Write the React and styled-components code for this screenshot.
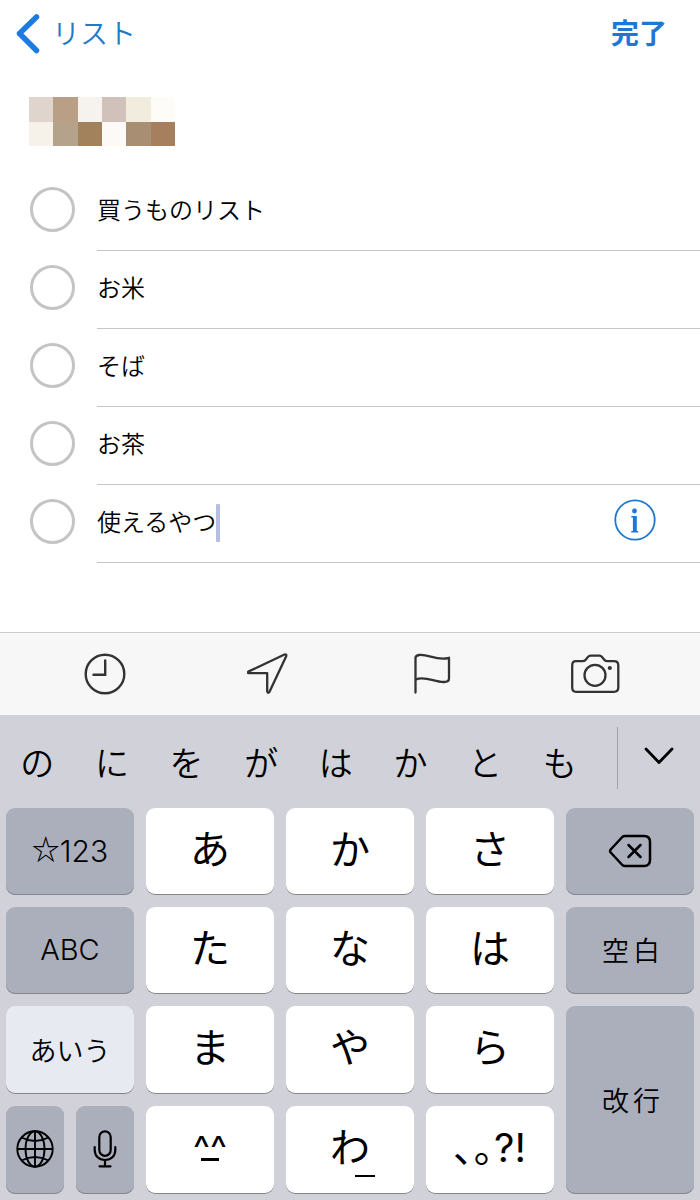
import React, { useState } from "react";
import styled, { createGlobalStyle } from "styled-components";

const TASKS = ["買うものリスト", "お米", "そば", "お茶"];

const CANDIDATES = ["の", "に", "を", "が", "は", "か", "と", "も"];

const MOSAIC = [
  ["#dfd5cd", "#b99f85", "#f6f2ee", "#d0c2ba", "#f2ecde", "#fdfcf7"],
  ["#f6f1e9", "#b4a28a", "#a1825c", "#fdf9f7", "#a88e72", "#a67f5f"],
];

const App = () => {
  const [draft, setDraft] = useState("使えるやつ");

  return (
    <Screen>
      <GlobalStyle />
      <NavBar>
        <BackLink href="#lists">
          <BackIcon />
          リスト
        </BackLink>
        <DoneButton type="button">完了</DoneButton>
      </NavBar>

      <Content>
        <Mosaic />
        <TaskList>
          {TASKS.map((task) => (
            <TaskRow key={task}>
              <TaskLabel>
                <Check type="checkbox" />
                <TaskText>{task}</TaskText>
              </TaskLabel>
            </TaskRow>
          ))}
          <TaskRow>
            <Check type="checkbox" aria-label={draft} />
            <TaskText>
              <TaskInput
                aria-label="リマインダー"
                value={draft}
                onChange={(e) => setDraft(e.target.value)}
              />
              <Caret />
              <InfoButton type="button" aria-label="詳細">
                <InfoIcon />
              </InfoButton>
            </TaskText>
          </TaskRow>
        </TaskList>
      </Content>

      <Toolbar>
        <ToolButton type="button" aria-label="日時"><ClockIcon /></ToolButton>
        <ToolButton type="button" aria-label="場所"><LocationIcon /></ToolButton>
        <ToolButton type="button" aria-label="フラグ"><FlagIcon /></ToolButton>
        <ToolButton type="button" aria-label="カメラ"><CameraIcon /></ToolButton>
      </Toolbar>

      <Keyboard>
        <CandidateBar>
          <Candidates>
            {CANDIDATES.map((word) => (
              <Candidate type="button" key={word}>{word}</Candidate>
            ))}
          </Candidates>
          <Divider />
          <ExpandButton type="button" aria-label="候補を開く">
            <ChevronIcon />
          </ExpandButton>
        </CandidateBar>

        <Keys>
          <Key type="button" $tone="dark" $size={30}><Star>☆</Star>123</Key>
          <Key type="button">あ</Key>
          <Key type="button">か</Key>
          <Key type="button">さ</Key>
          <Key type="button" $tone="dark" aria-label="削除"><DeleteIcon /></Key>

          <Key type="button" $tone="dark" $size={29}>ABC</Key>
          <Key type="button">た</Key>
          <Key type="button">な</Key>
          <Key type="button">は</Key>
          <Key type="button" $tone="dark" $size={27} $wide>空白</Key>

          <Key type="button" $tone="light" $size={27}>あいう</Key>
          <Key type="button">ま</Key>
          <Key type="button">や</Key>
          <Key type="button">ら</Key>
          <Key type="button" $tone="dark" $size={27} $wide $tall>改行</Key>

          <KeyPair>
            <Key type="button" $tone="dark" aria-label="次のキーボード"><GlobeIcon /></Key>
            <Key type="button" $tone="dark" aria-label="音声入力"><MicIcon /></Key>
          </KeyPair>
          <Key type="button" $size={36}>
            <Face>^^<Mouth /></Face>
          </Key>
          <Key type="button">
            <Face>わ<Underline /></Face>
          </Key>
          <Key type="button">､｡?!</Key>
        </Keys>
      </Keyboard>
    </Screen>
  );
};

export default App;


// アイコン

const BackIcon = () => (
  <svg width="24" height="40" viewBox="0 0 24 40" fill="none" stroke="#1b7be3" strokeWidth="5.500" strokeLinecap="round" strokeLinejoin="round">
    <path d="M20.500 3L3.500 19.500L20.500 36.500" />
  </svg>
);

const Mosaic = () => (
  <MosaicSvg width="146" height="49" viewBox="0 0 6 2" preserveAspectRatio="none" shapeRendering="crispEdges">
    {MOSAIC.map((line, y) =>
      line.map((color, x) => (
        <rect key={`${x}-${y}`} x={x} y={y} width="1" height="1" fill={color} />
      ))
    )}
  </MosaicSvg>
);

const InfoIcon = () => (
  <svg width="42" height="42" viewBox="0 0 42 42" fill="#1a78d6">
    <circle cx="21" cy="21" r="19.700" fill="none" stroke="#1f78c8" strokeWidth="1.800" />
    <circle cx="20.500" cy="12" r="2.400" />
    <path d="M17.300 17H22.800V32H24.300V33.500H17.300V32H18.900V18.500H17.300Z" />
  </svg>
);

const ClockIcon = () => (
  <svg width="42" height="42" viewBox="0 0 42 42" fill="none" stroke="#333" strokeWidth="2.400" strokeLinecap="round">
    <circle cx="21" cy="21" r="19.300" />
    <path d="M21.200 7.500V21.700H9.500" />
  </svg>
);

const LocationIcon = () => (
  <svg width="42" height="42" viewBox="0 0 42 42" fill="none" stroke="#333" strokeWidth="2.300" strokeLinejoin="round">
    <path d="M1.300 18.600L37.500 1.500Q39.800 0.900 39.200 3.200L22.500 38.800Q21 40.900 20.200 38.500V20.200H1.800Q-0.500 19.800 1.300 18.600Z" />
  </svg>
);

const FlagIcon = () => (
  <svg width="38" height="42" viewBox="0 0 38 42" fill="none" stroke="#333" strokeWidth="2.300" strokeLinecap="round" strokeLinejoin="round">
    <path d="M2.500 39.500V5Q2.500 2.600 6 2C15 0.600 24 8.500 36 4.800V25.500C36 27.800 34.500 29 31 29C22 29.500 13 22.800 3 26.300" />
  </svg>
);

const CameraIcon = () => (
  <svg width="50" height="42" viewBox="0 0 50 42" fill="none" stroke="#333" strokeWidth="2.300" strokeLinejoin="round">
    <path d="M6 8.200H12.500Q14.500 8.200 15.500 7L18 3.900Q19 2.700 20.500 2.700H29.500Q31 2.700 32 3.900L34.500 7Q35.500 8.200 37.500 8.200H44Q48.300 8.200 48.300 12.500V34.500Q48.300 38.800 44 38.800H6Q2.200 38.800 2.200 34.500V12.500Q2.200 8.200 6 8.200Z" />
    <circle cx="25" cy="22.300" r="10.500" />
    <circle cx="39.800" cy="15" r="2.100" fill="#333" stroke="none" />
  </svg>
);

const ChevronIcon = () => (
  <svg width="32" height="20" viewBox="0 0 32 20" fill="none" stroke="#000" strokeWidth="2.800" strokeLinecap="round" strokeLinejoin="round">
    <path d="M3 3L16 16.500L29 3" />
  </svg>
);

const DeleteIcon = () => (
  <svg width="44" height="34" viewBox="0 0 44 34" fill="none" stroke="#000" strokeWidth="2.500" strokeLinecap="round" strokeLinejoin="round">
    <path d="M17 2H36Q42 2 42 8V26Q42 32 36 32H17Q15.500 32 14.300 31L2.700 18.500Q1.500 17 2.700 15.500L14.300 3Q15.500 2 17 2Z" />
    <path d="M20.500 11L32.500 23M32.500 11L20.500 23" />
  </svg>
);

const GlobeIcon = () => (
  <svg width="38" height="38" viewBox="0 0 38 38" fill="none" stroke="#000" strokeWidth="1.900">
    <circle cx="19" cy="19" r="17.700" />
    <ellipse cx="19" cy="19" rx="9.500" ry="17.700" />
    <path d="M19 1.300V36.700M1.300 19H36.700M5.500 7.500Q19 14.500 32.500 7.500M5.500 30.500Q19 23.500 32.500 30.500" />
  </svg>
);

const MicIcon = () => (
  <svg width="24" height="38" viewBox="0 0 24 38" fill="none" stroke="#000" strokeWidth="2.200" strokeLinecap="round">
    <rect x="6.300" y="1.300" width="11.400" height="24.500" rx="5.700" />
    <path d="M1.700 17V20C1.700 26 6 30 12 30S22.300 26 22.300 20V17M12 30V36M6.500 36.300H17.500" />
  </svg>
);


// スタイル

const GlobalStyle = createGlobalStyle`
  * {
    box-sizing: border-box;
  }

  body {
    margin: 0;
    background: #fff;
    color: #000;
    font-family: Inter, "Noto Sans CJK JP", sans-serif;
  }

  button, input {
    margin: 0;
    padding: 0;
    border: 0;
    background: none;
    color: inherit;
    font: inherit;
  }

  button {
    cursor: pointer;
  }

  svg {
    display: block;
    flex: none;
  }
`;

const Screen = styled.div`
  display: flex;
  flex-direction: column;
  min-height: 100vh;
`;

const NavBar = styled.header`
  display: flex;
  align-items: center;
  justify-content: space-between;
  height: 68px;
  padding: 0 33px 0 16px;
  font-size: 28px;
  line-height: 40px;
`;

const BackLink = styled.a`
  display: flex;
  align-items: center;
  gap: 12px;
  color: #1f7ac8;
  font-weight: 350;
  text-decoration: none;
`;

const DoneButton = styled.button`
  color: #1b78d4;
  font-weight: bold;
`;

const Content = styled.main`
  flex: 1;
  padding-top: 29px;
`;

const MosaicSvg = styled.svg`
  margin-left: 29px;
`;

const TaskList = styled.ul`
  margin: 0;
  padding: 27px 0 0;
  list-style: none;
`;

const TaskRow = styled.li`
  display: flex;
  align-items: center;
  height: 78px;
  padding-left: 30px;
  font-size: 24px;
  font-weight: 350;
`;

const TaskLabel = styled.label`
  display: flex;
  align-items: center;
  flex: 1;
`;

const Check = styled.input`
  appearance: none;
  flex: none;
  width: 45px;
  height: 45px;
  margin: 0 22px 6px 0;
  border: 3px solid #c4c4c6;
  border-radius: 50%;

  &:checked {
    background: #1b7be3;
  }
`;

const TaskText = styled.span`
  display: flex;
  align-items: center;
  flex: 1;
  height: 78px;
  padding: 0 44px 7px 0;
  border-bottom: 1px solid #c6c6c8;
`;

const TaskInput = styled.input`
  field-sizing: content;
  outline: none;
  caret-color: transparent;
`;

const Caret = styled.span`
  width: 4px;
  height: 38px;
  margin-top: 6px;
  border-radius: 1px;
  background: #b7bde3;
`;

const InfoButton = styled.button`
  margin-left: auto;
`;

const Toolbar = styled.div`
  display: flex;
  justify-content: space-between;
  align-items: center;
  height: 83px;
  padding: 0 80px;
  border-top: 1px solid #cbcbcd;
  background: #f7f7f7;
`;

const ToolButton = styled.button`
  display: flex;
  justify-content: center;
  width: 50px;
`;

const Keyboard = styled.section`
  background: #d1d2d9;
`;

const CandidateBar = styled.div`
  display: flex;
  height: 93px;
  padding-top: 12px;
`;

const Candidates = styled.div`
  display: grid;
  grid-template-columns: repeat(8, 1fr);
  flex: 1;
  padding-right: 20px;
`;

const Candidate = styled.button`
  height: 68px;
  font-size: 34px;
  font-weight: 350;
`;

const Divider = styled.span`
  width: 1px;
  height: 62px;
  background: #a3a4aa;
`;

const ExpandButton = styled.button`
  display: flex;
  align-items: center;
  justify-content: center;
  width: 82px;
  height: 58px;
`;

const Keys = styled.div`
  display: grid;
  grid-template-columns: repeat(5, 1fr);
  grid-template-rows: 87px 87px 88px 88px;
  gap: 12px;
  padding: 0 6px 6px;
`;

const TONES = {
  white: "#fff",
  light: "#e7eaf0",
  dark: "#abafbc",
};

const Key = styled.button`
  display: flex;
  align-items: center;
  justify-content: center;
  grid-row: ${({ $tall }) => ($tall ? "span 2" : "auto")};
  padding-bottom: ${({ $tone, $size }) => ($tone ? 2 : $size ? 4 : 10)}px;
  padding-left: ${({ $wide }) => ($wide ? 6 : 0)}px;
  border-radius: 9px;
  background: ${({ $tone = "white" }) => TONES[$tone]};
  box-shadow: inset 0 -1px 0 #85868c;
  font-size: ${({ $size = 40 }) => $size}px;
  font-weight: ${({ $tone }) => ($tone ? 350 : 400)};
  letter-spacing: ${({ $wide }) => ($wide ? "4px" : "normal")};
`;

const KeyPair = styled.div`
  display: grid;
  grid-template-columns: 1fr 1fr;
  gap: 12px;
`;

const Star = styled.span`
  padding-bottom: 5px;
  font-family: "Noto Sans CJK JP", sans-serif;
  font-size: 28px;
  font-weight: 500;
  line-height: 1;
`;

const Face = styled.span`
  position: relative;
`;

const Mouth = styled.span`
  position: absolute;
  left: calc(50% - 9px);
  bottom: 9px;
  width: 18px;
  height: 3px;
  background: #000;
`;

const Underline = styled.span`
  position: absolute;
  right: -5px;
  bottom: -3px;
  width: 20px;
  height: 2px;
  background: #000;
`;
